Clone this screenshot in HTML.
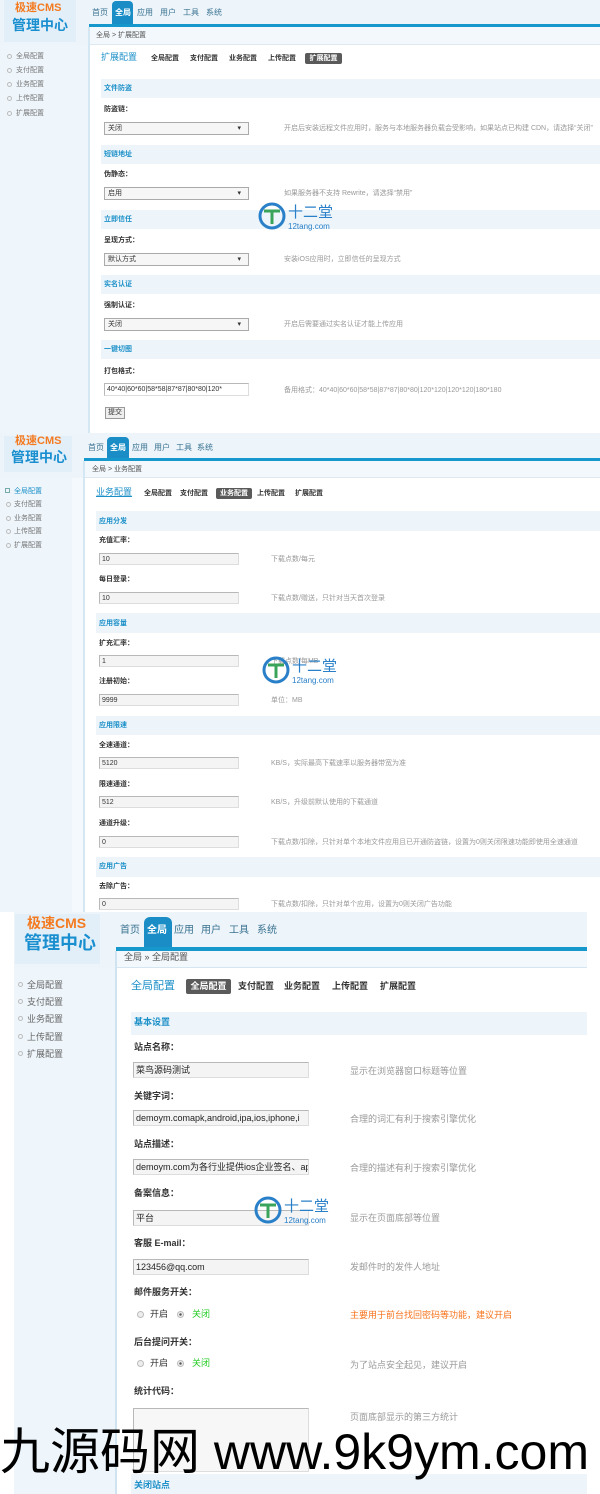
<!DOCTYPE html>
<html><head><meta charset="utf-8"><style>
*{margin:0;padding:0;box-sizing:border-box}
body{width:600px;height:1494px;position:relative;overflow:hidden;background:#fff;font-family:"Liberation Sans","Noto Sans CJK SC",sans-serif;color:#333}
.a{position:absolute;white-space:nowrap;line-height:1}
.bg{position:absolute}
.s7{font-size:7px}.s8{font-size:8px}.s9{font-size:9px}
.b{font-weight:bold}
.bl{color:#1d90c8}.g{color:#999}.nv{color:#3a7290}
.band{position:absolute;background:#edf5fb}
.inp{position:absolute;background:#f4f4f4;border:1px solid #b8b8b8;border-right-color:#ddd;border-bottom-color:#ddd;white-space:nowrap;overflow:hidden;line-height:1;padding-left:2px}
.sel{position:absolute;background:#f6f6f6;border:1px solid #aaa;line-height:1;padding-left:3px;font-size:7px}
.sel:after{content:"▾";position:absolute;right:7px;top:2px;font-size:7px}
.act{position:absolute;background:#5a5a5a;color:#fff;border-radius:2px;font-weight:bold;text-align:center;line-height:1}
.tab{position:absolute;background:#1a8dc6;color:#fff;border-radius:4px 4px 0 0;text-align:center;font-weight:bold}
.dot{position:absolute;width:5px;height:5px;border:1px solid #bbb;border-radius:50%}
.wm{position:absolute;width:120px;height:30px}
</style></head><body>

<!-- ===== PANEL 1 ===== -->
<div class="bg" style="left:0;top:0;width:600px;height:45px;background:#edf5fb"></div>
<div class="bg" style="left:4px;top:0;width:72px;height:42px;background:#e3eff8"></div>
<div class="a b" style="left:15px;top:3px;font-size:11px;color:#f47a20">极速CMS</div>
<div class="a b" style="left:12px;top:18px;font-size:14px;color:#1a8fd0">管理中心</div>
<div class="tab" style="left:112px;top:1px;width:21px;height:23px"><span class="a s8" style="left:3px;top:8px">全局</span></div>
<div class="a s8 nv" style="left:92px;top:9px">首页</div>
<div class="a s8 nv" style="left:137px;top:9px">应用</div>
<div class="a s8 nv" style="left:160px;top:9px">用户</div>
<div class="a s8 nv" style="left:183px;top:9px">工具</div>
<div class="a s8 nv" style="left:206px;top:9px">系统</div>
<div class="bg" style="left:89px;top:24px;width:511px;height:3px;background:#1798cc"></div>
<div class="bg" style="left:89px;top:27px;width:511px;height:18px;background:#f2f8fc;border-bottom:1px solid #dce9f2"></div>
<div class="a s7" style="left:96px;top:32px;color:#555">全局 &gt; 扩展配置</div>
<div class="bg" style="left:0;top:45px;width:88px;height:388px;background:#eef6fc"></div>
<div class="bg" style="left:88px;top:27px;width:2px;height:406px;background:#d4e8f4"></div>
<div class="dot" style="left:7px;top:54px"></div><div class="a s7 g" style="left:16px;top:53px;color:#777">全局配置</div>
<div class="dot" style="left:7px;top:68px"></div><div class="a s7" style="left:16px;top:67px;color:#777">支付配置</div>
<div class="dot" style="left:7px;top:82px"></div><div class="a s7" style="left:16px;top:81px;color:#777">业务配置</div>
<div class="dot" style="left:7px;top:96px"></div><div class="a s7" style="left:16px;top:95px;color:#777">上传配置</div>
<div class="dot" style="left:7px;top:111px"></div><div class="a s7" style="left:16px;top:110px;color:#777">扩展配置</div>
<div class="a s9 bl" style="left:101px;top:53px">扩展配置</div>
<div class="a s7 b" style="left:151px;top:55px">全局配置</div>
<div class="a s7 b" style="left:190px;top:55px">支付配置</div>
<div class="a s7 b" style="left:229px;top:55px">业务配置</div>
<div class="a s7 b" style="left:268px;top:55px">上传配置</div>
<div class="act s7" style="left:305px;top:53px;width:37px;height:11px;padding-top:2px">扩展配置</div>

<div class="band" style="left:101px;top:79px;width:499px;height:19px"></div><div class="a s7 b bl" style="left:104px;top:85px">文件防盗</div>
<div class="a s7 b" style="left:104px;top:106px">防盗链：</div>
<div class="sel" style="left:104px;top:122px;width:145px;height:13px;padding-top:2px">关闭</div>
<div class="a s7 g" style="left:284px;top:125px">开启后安装远程文件应用时，服务与本地服务器负载会受影响，如果站点已构建 CDN，请选择“关闭”</div>
<div class="band" style="left:101px;top:145px;width:499px;height:19px"></div><div class="a s7 b bl" style="left:104px;top:151px">短链地址</div>
<div class="a s7 b" style="left:104px;top:171px">伪静态：</div>
<div class="sel" style="left:104px;top:187px;width:145px;height:13px;padding-top:2px">启用</div>
<div class="a s7 g" style="left:284px;top:190px">如果服务器不支持 Rewrite，请选择“禁用”</div>
<div class="band" style="left:101px;top:210px;width:499px;height:19px"></div><div class="a s7 b bl" style="left:104px;top:216px">立即信任</div>
<div class="a s7 b" style="left:104px;top:237px">呈现方式：</div>
<div class="sel" style="left:104px;top:253px;width:145px;height:13px;padding-top:2px">默认方式</div>
<div class="a s7 g" style="left:284px;top:256px">安装iOS应用时，立即信任的呈现方式</div>
<div class="band" style="left:101px;top:275px;width:499px;height:19px"></div><div class="a s7 b bl" style="left:104px;top:281px">实名认证</div>
<div class="a s7 b" style="left:104px;top:302px">强制认证：</div>
<div class="sel" style="left:104px;top:318px;width:145px;height:13px;padding-top:2px">关闭</div>
<div class="a s7 g" style="left:284px;top:321px">开启后需要通过实名认证才能上传应用</div>
<div class="band" style="left:101px;top:340px;width:499px;height:19px"></div><div class="a s7 b bl" style="left:104px;top:346px">一键切图</div>
<div class="a s7 b" style="left:104px;top:368px">打包格式：</div>
<div class="inp s7" style="left:104px;top:383px;width:145px;height:13px;padding-top:2px;background:#fff">40*40|60*60|58*58|87*87|80*80|120*</div>
<div class="a s7 g" style="left:284px;top:387px">备用格式：40*40|60*60|58*58|87*87|80*80|120*120|120*120|180*180</div>
<div class="bg" style="left:105px;top:407px;width:20px;height:12px;background:#eee;border:1px solid #999"></div><div class="a s7" style="left:108px;top:409px">提交</div>

<!-- ===== PANEL 2 ===== -->
<div class="bg" style="left:0;top:433px;width:600px;height:45px;background:#edf5fb"></div>
<div class="bg" style="left:4px;top:436px;width:68px;height:36px;background:#e3eff8"></div>
<div class="a b" style="left:15px;top:436px;font-size:11px;color:#f47a20">极速CMS</div>
<div class="a b" style="left:11px;top:450px;font-size:14px;color:#1a8fd0">管理中心</div>
<div class="tab" style="left:107px;top:437px;width:22px;height:22px"><span class="a s8" style="left:3px;top:7px">全局</span></div>
<div class="a s8 nv" style="left:88px;top:444px">首页</div>
<div class="a s8 nv" style="left:132px;top:444px">应用</div>
<div class="a s8 nv" style="left:154px;top:444px">用户</div>
<div class="a s8 nv" style="left:176px;top:444px">工具</div>
<div class="a s8 nv" style="left:197px;top:444px">系统</div>
<div class="bg" style="left:84px;top:458px;width:516px;height:3px;background:#1798cc"></div>
<div class="bg" style="left:84px;top:461px;width:516px;height:17px;background:#f2f8fc;border-bottom:1px solid #dce9f2"></div>
<div class="a s7" style="left:92px;top:466px;color:#555">全局 &gt; 业务配置</div>
<div class="bg" style="left:0;top:478px;width:83px;height:434px;background:#eef6fc"></div>
<div class="bg" style="left:72px;top:478px;width:11px;height:434px;background:#f4f9fd"></div>
<div class="bg" style="left:83px;top:461px;width:2px;height:451px;background:#d4e8f4"></div>
<div class="bg" style="left:5px;top:488px;width:5px;height:5px;border:1px solid #7aa"></div><div class="a s7 bl" style="left:14px;top:488px">全局配置</div>
<div class="dot" style="left:6px;top:502px"></div><div class="a s7" style="left:14px;top:501px;color:#777">支付配置</div>
<div class="dot" style="left:6px;top:516px"></div><div class="a s7" style="left:14px;top:515px;color:#777">业务配置</div>
<div class="dot" style="left:6px;top:529px"></div><div class="a s7" style="left:14px;top:528px;color:#777">上传配置</div>
<div class="dot" style="left:6px;top:543px"></div><div class="a s7" style="left:14px;top:542px;color:#777">扩展配置</div>
<div class="a s9 bl" style="left:96px;top:488px;text-decoration:underline">业务配置</div>
<div class="a s7 b" style="left:144px;top:490px">全局配置</div>
<div class="a s7 b" style="left:180px;top:490px">支付配置</div>
<div class="act s7" style="left:216px;top:488px;width:36px;height:11px;padding-top:2px">业务配置</div>
<div class="a s7 b" style="left:257px;top:490px">上传配置</div>
<div class="a s7 b" style="left:295px;top:490px">扩展配置</div>

<div class="band" style="left:96px;top:511px;width:504px;height:20px"></div><div class="a s7 b bl" style="left:99px;top:518px">应用分发</div>
<div class="a s7 b" style="left:99px;top:537px">充值汇率：</div>
<div class="inp s7" style="left:99px;top:553px;width:140px;height:12px;padding-top:2px">10</div><div class="a s7 g" style="left:271px;top:556px">下载点数/每元</div>
<div class="a s7 b" style="left:99px;top:576px">每日登录：</div>
<div class="inp s7" style="left:99px;top:592px;width:140px;height:12px;padding-top:2px">10</div><div class="a s7 g" style="left:271px;top:595px">下载点数/赠送，只针对当天首次登录</div>
<div class="band" style="left:96px;top:613px;width:504px;height:20px"></div><div class="a s7 b bl" style="left:99px;top:620px">应用容量</div>
<div class="a s7 b" style="left:99px;top:640px">扩充汇率：</div>
<div class="inp s7" style="left:99px;top:655px;width:140px;height:12px;padding-top:2px">1</div><div class="a s7 g" style="left:271px;top:658px">下载点数/每MB</div>
<div class="a s7 b" style="left:99px;top:678px">注册初始：</div>
<div class="inp s7" style="left:99px;top:694px;width:140px;height:12px;padding-top:2px">9999</div><div class="a s7 g" style="left:271px;top:697px">单位：MB</div>
<div class="band" style="left:96px;top:716px;width:504px;height:19px"></div><div class="a s7 b bl" style="left:99px;top:722px">应用限速</div>
<div class="a s7 b" style="left:99px;top:742px">全速通道：</div>
<div class="inp s7" style="left:99px;top:757px;width:140px;height:12px;padding-top:2px">5120</div><div class="a s7 g" style="left:271px;top:760px">KB/S，实际最高下载速率以服务器带宽为准</div>
<div class="a s7 b" style="left:99px;top:781px">限速通道：</div>
<div class="inp s7" style="left:99px;top:796px;width:140px;height:12px;padding-top:2px">512</div><div class="a s7 g" style="left:271px;top:799px">KB/S，升级前默认使用的下载通道</div>
<div class="a s7 b" style="left:99px;top:820px">通道升级：</div>
<div class="inp s7" style="left:99px;top:836px;width:140px;height:12px;padding-top:2px">0</div><div class="a s7 g" style="left:271px;top:839px">下载点数/扣除，只针对单个本地文件应用且已开通防盗链，设置为0则关闭限速功能即使用全速通道</div>
<div class="band" style="left:96px;top:857px;width:504px;height:20px"></div><div class="a s7 b bl" style="left:99px;top:863px">应用广告</div>
<div class="a s7 b" style="left:99px;top:883px">去除广告：</div>
<div class="inp s7" style="left:99px;top:898px;width:140px;height:12px;padding-top:2px">0</div><div class="a s7 g" style="left:271px;top:901px">下载点数/扣除，只针对单个应用，设置为0则关闭广告功能</div>

<!-- ===== PANEL 3 ===== -->
<div class="bg" style="left:0;top:912px;width:600px;height:582px;background:#fff"></div>
<div class="bg" style="left:14px;top:912px;width:573px;height:56px;background:#edf5fb"></div>
<div class="bg" style="left:15px;top:914px;width:85px;height:50px;background:#e3eff8"></div>
<div class="a b" style="left:27px;top:916px;font-size:14px;color:#f47a20">极速CMS</div>
<div class="a b" style="left:24px;top:934px;font-size:18px;color:#1a8fd0">管理中心</div>
<div class="tab" style="left:144px;top:917px;width:28px;height:31px;border-radius:6px 6px 0 0"><span class="a" style="left:3px;top:9px;font-size:10px">全局</span></div>
<div class="a nv" style="left:120px;top:926px;font-size:10px">首页</div>
<div class="a nv" style="left:174px;top:926px;font-size:10px">应用</div>
<div class="a nv" style="left:201px;top:926px;font-size:10px">用户</div>
<div class="a nv" style="left:229px;top:926px;font-size:10px">工具</div>
<div class="a nv" style="left:257px;top:926px;font-size:10px">系统</div>
<div class="bg" style="left:116px;top:947px;width:471px;height:4px;background:#1798cc"></div>
<div class="bg" style="left:116px;top:951px;width:471px;height:17px;background:#f2f8fc;border-bottom:1px solid #d4e6f2"></div>
<div class="a s9" style="left:124px;top:953px;color:#555">全局 » 全局配置</div>
<div class="bg" style="left:14px;top:968px;width:101px;height:526px;background:#eef6fc"></div>
<div class="bg" style="left:115px;top:951px;width:2px;height:543px;background:#cfe3f0"></div>
<div class="dot" style="left:18px;top:982px"></div><div class="a s9" style="left:27px;top:981px;color:#666">全局配置</div>
<div class="dot" style="left:18px;top:999px"></div><div class="a s9" style="left:27px;top:998px;color:#666">支付配置</div>
<div class="dot" style="left:18px;top:1016px"></div><div class="a s9" style="left:27px;top:1015px;color:#666">业务配置</div>
<div class="dot" style="left:18px;top:1034px"></div><div class="a s9" style="left:27px;top:1033px;color:#666">上传配置</div>
<div class="dot" style="left:18px;top:1051px"></div><div class="a s9" style="left:27px;top:1050px;color:#666">扩展配置</div>
<div class="a bl" style="left:131px;top:981px;font-size:11px">全局配置</div>
<div class="act s9" style="left:186px;top:979px;width:45px;height:15px;padding-top:3px">全局配置</div>
<div class="a s9 b" style="left:238px;top:982px">支付配置</div>
<div class="a s9 b" style="left:284px;top:982px">业务配置</div>
<div class="a s9 b" style="left:332px;top:982px">上传配置</div>
<div class="a s9 b" style="left:380px;top:982px">扩展配置</div>

<div class="band" style="left:131px;top:1012px;width:456px;height:23px"></div><div class="a s9 b bl" style="left:134px;top:1018px">基本设置</div>
<div class="a s9 b" style="left:134px;top:1043px">站点名称：</div>
<div class="inp s9" style="left:133px;top:1062px;width:176px;height:16px;padding-top:3px;color:#222">菜鸟源码测试</div><div class="a s9 g" style="left:350px;top:1067px">显示在浏览器窗口标题等位置</div>
<div class="a s9 b" style="left:134px;top:1092px">关键字词：</div>
<div class="inp s9" style="left:133px;top:1110px;width:176px;height:16px;padding-top:3px;color:#222">demoym.comapk,android,ipa,ios,iphone,i</div><div class="a s9 g" style="left:350px;top:1115px">合理的词汇有利于搜索引擎优化</div>
<div class="a s9 b" style="left:134px;top:1140px">站点描述：</div>
<div class="inp s9" style="left:133px;top:1159px;width:176px;height:16px;padding-top:3px;color:#222">demoym.com为各行业提供ios企业签名、app</div><div class="a s9 g" style="left:350px;top:1164px">合理的描述有利于搜索引擎优化</div>
<div class="a s9 b" style="left:134px;top:1189px">备案信息：</div>
<div class="inp s9" style="left:133px;top:1210px;width:176px;height:16px;padding-top:3px;color:#222">平台</div><div class="a s9 g" style="left:350px;top:1214px">显示在页面底部等位置</div>
<div class="a s9 b" style="left:134px;top:1239px">客服 E-mail：</div>
<div class="inp s9" style="left:133px;top:1259px;width:176px;height:16px;padding-top:3px;color:#222">123456@qq.com</div><div class="a s9 g" style="left:350px;top:1263px">发邮件时的发件人地址</div>
<div class="a s9 b" style="left:134px;top:1288px">邮件服务开关：</div>
<div class="dot" style="left:137px;top:1311px;width:7px;height:7px;background:#eee"></div><div class="a s9" style="left:150px;top:1310px">开启</div>
<div class="dot" style="left:177px;top:1311px;width:7px;height:7px;background:radial-gradient(#555 30%,#eee 40%)"></div><div class="a s9" style="left:192px;top:1310px;color:#2c2">关闭</div>
<div class="a s9" style="left:350px;top:1311px;color:#f6731c">主要用于前台找回密码等功能，建议开启</div>
<div class="a s9 b" style="left:134px;top:1338px">后台提问开关：</div>
<div class="dot" style="left:137px;top:1360px;width:7px;height:7px;background:#eee"></div><div class="a s9" style="left:150px;top:1359px">开启</div>
<div class="dot" style="left:177px;top:1360px;width:7px;height:7px;background:radial-gradient(#555 30%,#eee 40%)"></div><div class="a s9" style="left:192px;top:1359px;color:#2c2">关闭</div>
<div class="a s9 g" style="left:350px;top:1361px">为了站点安全起见，建议开启</div>
<div class="a s9 b" style="left:134px;top:1387px">统计代码：</div>
<div class="inp" style="left:133px;top:1408px;width:176px;height:64px;background:#f7f7f7"></div><div class="a s9 g" style="left:350px;top:1413px">页面底部显示的第三方统计</div>
<div class="band" style="left:131px;top:1474px;width:456px;height:20px"></div><div class="a s9 b bl" style="left:134px;top:1481px">关闭站点</div>

<!-- watermarks 十二堂 -->
<svg class="wm" style="left:258px;top:201px" viewBox="0 0 120 30"><circle cx="14" cy="15" r="12" fill="none" stroke="#2a80c8" stroke-width="3"/><path d="M6 10h16M14 10v13" stroke="#3aa55a" stroke-width="3"/><text x="30" y="16" font-size="15" fill="#2a80c8" font-family="Noto Sans CJK SC">十二堂</text><text x="30" y="28" font-size="8" fill="#2a80c8" font-family="Liberation Sans">12tang.com</text></svg>
<svg class="wm" style="left:262px;top:655px" viewBox="0 0 120 30"><circle cx="14" cy="15" r="12" fill="none" stroke="#2a80c8" stroke-width="3"/><path d="M6 10h16M14 10v13" stroke="#3aa55a" stroke-width="3"/><text x="30" y="16" font-size="15" fill="#2a80c8" font-family="Noto Sans CJK SC">十二堂</text><text x="30" y="28" font-size="8" fill="#2a80c8" font-family="Liberation Sans">12tang.com</text></svg>
<svg class="wm" style="left:254px;top:1195px" viewBox="0 0 120 30"><circle cx="14" cy="15" r="12" fill="none" stroke="#2a80c8" stroke-width="3"/><path d="M6 10h16M14 10v13" stroke="#3aa55a" stroke-width="3"/><text x="30" y="16" font-size="15" fill="#2a80c8" font-family="Noto Sans CJK SC">十二堂</text><text x="30" y="28" font-size="8" fill="#2a80c8" font-family="Liberation Sans">12tang.com</text></svg>

<!-- big watermark -->
<div class="a" style="left:0;top:1427px;font-size:50px;color:#000;letter-spacing:0">九源码网 www.9k9ym.com</div>
</body></html>
